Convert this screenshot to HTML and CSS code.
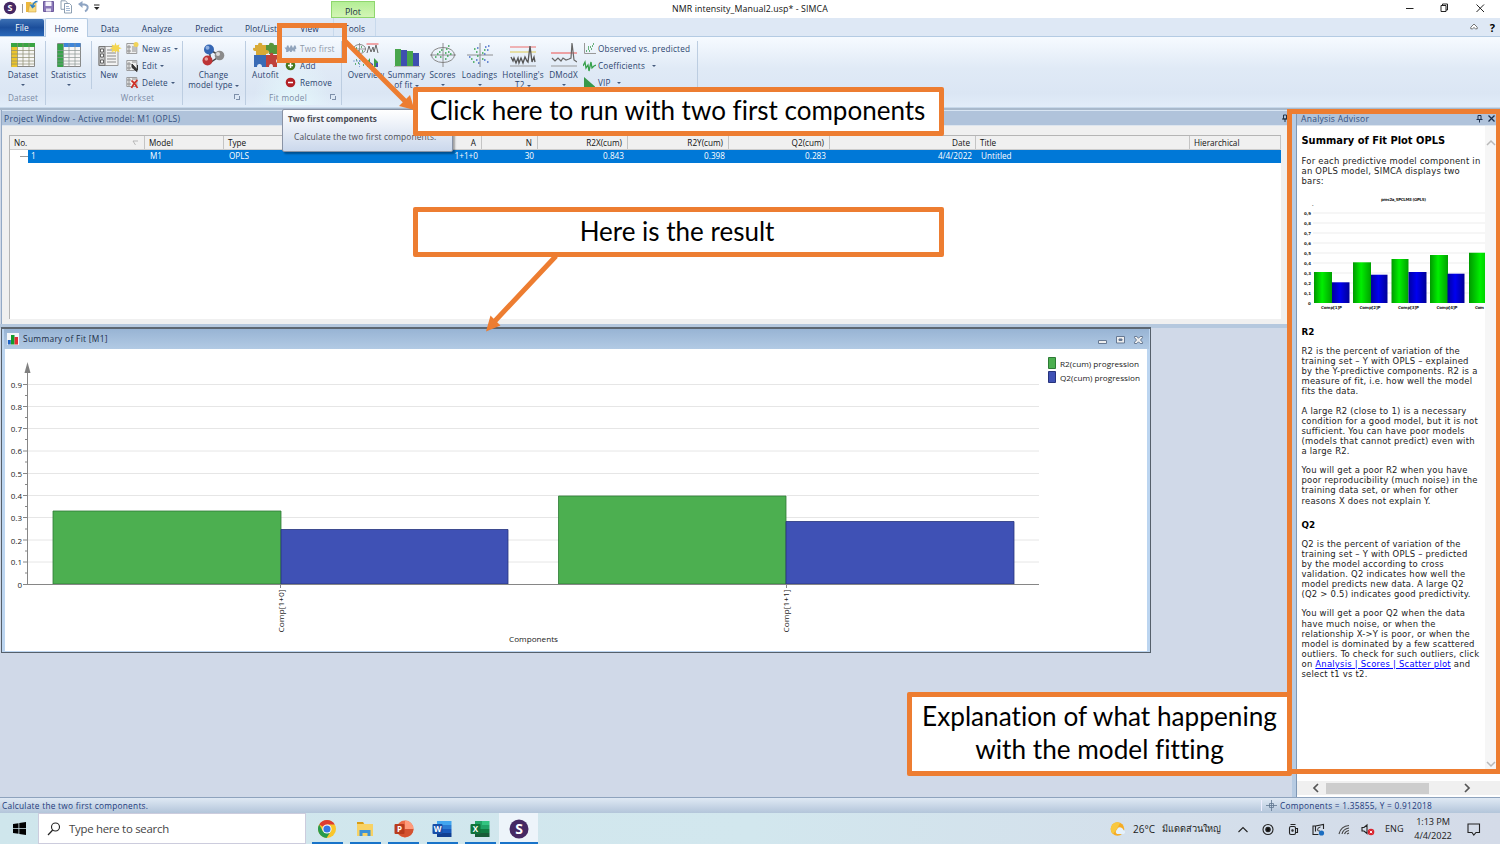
FILE: index.html
```html
<!DOCTYPE html>
<html lang="en">
<head>
<meta charset="utf-8">
<title>NMR intensity_Manual2.usp* - SIMCA</title>
<link rel="stylesheet" href="styles.css">
</head>
<body>
<div class="app">
  <header class="titlebar">
    <svg class="quick" width="110" height="18" viewBox="0 0 110 18">
      <circle cx="10" cy="8" r="6.2" fill="#452863"/>
      <text x="10" y="11.3" text-anchor="middle" class="s-logo">S</text>
      <path d="M22.5 4v9" stroke="#999"/>
      <path d="M26 2h5v10h-5z" fill="#edb83c"/><path d="M30 3h6v9h-8z" fill="#f8dc83" stroke="#d2a23a" stroke-width=".6"/><path d="M37.500 1.500q-4 0-5 5M30.500 4.500l2 3 2.500-2" stroke="#2b7fc4" stroke-width="1.500" fill="none"/>
      <path d="M43.500 1.500h10v10h-10z" fill="#8b78b8" stroke="#6c5a9c"/><path d="M45.500 1.500h6v4.500h-6z" fill="#f6f4fb"/><path d="M46 8.500h5v3h-5z" fill="#e4def0"/>
      <g fill="#fff" stroke="#71889f" stroke-width=".8"><path d="M61 .8h4.500l1.500 1.500v7h-6z"/><path d="M64.500 3.500h5l2 2v7.500h-7z"/></g><path d="M66 6.500h3M66 8.500h4M66 10.500h4" stroke="#7d9bc0" stroke-width=".7"/>
      <path d="M80 4.500h4.500q4 .8 3 4-.6 2-2.500 2.800" fill="none" stroke="#8fa5c3" stroke-width="2"/><path d="M82.500 1v7L78 4z" fill="#8fa5c3"/>
      <path d="M94 5h5.500" stroke="#222"/><path d="M94 7h5.500l-2.700 3z" fill="#222"/>
    </svg>
    <span class="app-title">NMR intensity_Manual2.usp* - SIMCA</span>
    <svg class="winctl" width="100" height="18" viewBox="1400 0 100 18" fill="none" stroke="#222"><path d="M1406 8.500h7.500"/><path d="M1441 5.500h5v6h-5zM1442.500 5.500v-1.500h5v6h-1.500"/><path d="M1476.500 4.500l7.500 7.500M1484 4.500l-7.500 7.500"/></svg>
  </header>
  <nav class="tabs">
    <span class="tab file">File</span><span class="tab home">Home</span><span class="tab data">Data</span><span class="tab analyze">Analyze</span><span class="tab predict">Predict</span><span class="tab plotlist">Plot/List</span><span class="tab view">View</span><span class="tab tools">Tools</span>
    <span class="help"><svg width="8" height="8" viewBox="0 0 8 8" fill="#fff" stroke="#555" stroke-width=".8"><path d="M.8 4.200L4 1l3.200 3.200v1.600H5.500L4 4.500 2.500 5.800H.8z"/></svg><b>?</b></span>
  </nav>
  <section class="ribbon">
    <div class="group g-dataset">
      <div class="big"><svg width="26" height="26" viewBox="0 0 26 26"><path d="M1.500 1.500h23v23h-23z" fill="#f6f6f4" stroke="#888"/><path d="M1.500 5h6v20h-6z" fill="#ecc52b"/><path d="M1 1h24v4H1z" fill="#39a443"/><path d="M1 8.500h24M1 12h24M1 15.500h24M1 19h24M1 22h24M7.500 1v24M13 1v24M19 1v24" stroke="#8c8c70" stroke-width=".7"/></svg><span>Dataset</span><i class="caret"></i></div>
      <div class="gname">Dataset</div>
    </div>
    <div class="group g-stat">
      <div class="big"><svg width="26" height="26" viewBox="0 0 26 26"><path d="M1.500 1.500h23v23h-23z" fill="#f6f6f6" stroke="#888"/><path d="M1.500 2h6v23h-6z" fill="#35a349"/><path d="M7.500 1h17v4h-17z" fill="#3f85d8"/><path d="M1 8.500h24M1 12h24M1 15.500h24M1 19h24M1 22h24M7.500 1v24M13 1v24M19 1v24" stroke="#8b9793" stroke-width=".7"/></svg><span>Statistics</span><i class="caret"></i></div>
    </div>
    <div class="group g-workset">
      <div class="row">
        <div class="big new"><svg width="26" height="26" viewBox="0 0 26 26"><path d="M3 4.500h19v19H3z" fill="#f2f2f2" stroke="#999"/><path d="M3 4.500h6v19H3z" fill="#c9c9c9" stroke="#777"/><path d="M4.500 7h3v3h-3zM4.500 12h3v3h-3zM4.500 18h3v3h-3z" fill="#fff" stroke="#444" stroke-width=".8"/><path d="M11 8h9M11 11h9M11 14h9M11 17h9M11 20h9" stroke="#888"/><path d="M19.500.5l1 3 3-1-.8 2.500 3 1.200-3 1 .8 3-3-1.200-1 2-1-2-3 1.200 1-3-2.500-1 2.500-1.200-1-2.500 3 1z" fill="#f4d650"/></svg><span>New</span></div>
        <div class="stack">
          <div class="small"><svg width="13" height="13" viewBox="0 0 13 13"><path d="M.8 1.500h10v10H.8z" fill="#eee" stroke="#888" stroke-width=".8"/><path d="M2 4h2v2H2zM2 8h2v2H2zM6 5h4M6 7h4M6 9h4" fill="#fff" stroke="#666" stroke-width=".7"/><circle cx="10" cy="2.500" r="2.500" fill="#f1d358"/></svg><span>New as</span><i class="caret"></i></div>
          <div class="small"><svg width="13" height="13" viewBox="0 0 13 13"><path d="M.8 1.500h10v10H.8z" fill="#eee" stroke="#888" stroke-width=".8"/><path d="M2 4h2v2H2zM2 8h2v2H2zM6 3h4" fill="#fff" stroke="#666" stroke-width=".7"/><path d="M6 5l5 5.500v2l-5-4zM11.500 6v5" fill="#343434" stroke="#333"/></svg><span>Edit</span><i class="caret"></i></div>
          <div class="small"><svg width="13" height="13" viewBox="0 0 13 13"><path d="M.8 1.500h10v9H.8z" fill="#eee" stroke="#888" stroke-width=".8"/><path d="M2 3h2v2H2zM2 7h2v2H2zM6 3h4" fill="#fff" stroke="#666" stroke-width=".7"/><path d="M5.500 4.500q4 3 6 7.500M11.500 4q-4 3-6 8" stroke="#cf3025" stroke-width="1.700" fill="none"/></svg><span>Delete</span><i class="caret"></i></div>
        </div>
      </div>
      <div class="gname">Workset</div>
    </div>
    <div class="group g-change">
      <div class="big"><svg width="24" height="26" viewBox="0 0 24 26"><path d="M7 7l2 13 9-6z" fill="none" stroke="#444" stroke-width="1.500"/><circle cx="7" cy="7.500" r="5" fill="#3466b4"/><circle cx="5.500" cy="5.800" r="2" fill="#8eafe0"/><circle cx="5.500" cy="18.500" r="5" fill="#bd3436"/><circle cx="4.300" cy="17" r="1.800" fill="#e6a19e"/><circle cx="17.500" cy="13.500" r="4.800" fill="#8b8b8b"/><circle cx="16" cy="12" r="2" fill="#ddd"/></svg><span>Change</span><span>model type <i class="caret"></i></span></div>
      <i class="launcher"></i>
    </div>
    <div class="group g-fit">
      <div class="row">
        <div class="big autofit"><svg width="26" height="26" viewBox="0 0 26 26"><path d="M2 3h3q0-3 3-2 2 0 1 2h4v4q3 0 3 2.500T13 12v1H3V9Q0 9 0 7t2-1z" fill="#d8aa36"/><path d="M13 3h3q0-3 3-2 2 0 2 2h4v4q-2 2 0 5h-9q1-4-3-4z" fill="#56953a"/><path d="M1 13h12v3q3 0 2 3-1 2-2 1v5H9q0-3-2.500-3T4 25H1z" fill="#396bb5"/><path d="M13 13h4q0-3 2-2 2 0 1 2h4v4q-2 2 0 4v4h-4q0-3-2-3t-2 3h-3z" fill="#bf423c"/></svg><span>Autofit</span></div>
        <div class="stack">
          <div class="small dim"><svg width="13" height="13" viewBox="0 0 13 13"><path d="M.5 5.500h2l.5-2h1.500l.5 2h1l.5-2H8l.5 2h1l.5-2h1.500l1 3-1.500 1 .5 2H9.500l-.5-1.500L7.500 10H6l-.5-1.500L4 10H2l.3-2z" fill="#91a4bc"/></svg><span>Two first</span></div>
          <div class="small"><svg width="13" height="13" viewBox="0 0 13 13"><circle cx="6.500" cy="6.500" r="4.800" fill="#47781f"/><path d="M6.500 4v5M4 6.500h5" stroke="#fff" stroke-width="1.500"/></svg><span>Add</span></div>
          <div class="small"><svg width="13" height="13" viewBox="0 0 13 13"><circle cx="6.500" cy="6.500" r="4.800" fill="#b32226"/><path d="M4 6.500h5" stroke="#fff" stroke-width="1.500"/></svg><span>Remove</span></div>
        </div>
      </div>
      <div class="gname">Fit model</div><i class="launcher"></i>
    </div>
    <div class="group g-plots">
      <div class="big ov"><svg width="26" height="26" viewBox="0 0 26 26"><ellipse cx="6.500" cy="7" rx="6" ry="4.500" fill="none" stroke="#888"/><path d="M0 7h13M6.500 1v12" stroke="#777" stroke-width=".7"/><path d="M3 6h1M8 5h1M5 9h1M9 9h1M3 18h1M6 16h1M5 21h1M9 19h1M10 23h1M2 22h1" stroke="#389a4d" stroke-width="1.500"/><path d="M0 19h13M6.500 15v10" stroke="#5d86c4" stroke-width=".7" stroke-dasharray="2 1"/><path d="M13.500 2h12" stroke="#e55"/><path d="M14 11l2-7 2 6 2-5 1 5 2-7 2 8" fill="none" stroke="#666"/><path d="M14 25v-5l3-4v9zM21 25v-9l4 4v5z" fill="#3d9c4a"/><path d="M17 25v-5l3 2v3zM23 25v-4h2v4z" fill="#3f51b5"/></svg><span>Overview</span></div>
      <div class="big su"><svg width="26" height="26" viewBox="0 0 26 26"><path d="M1 7h6v17H1zM13 9h6v15h-6z" fill="#48a64c"/><path d="M7 8h6v16H7zM19 11h6v13h-6z" fill="#3e4fb0"/><path d="M0 24.500h26" stroke="#bbb"/></svg><span>Summary</span><span>of fit <i class="caret"></i></span></div>
      <div class="big sc"><svg width="26" height="26" viewBox="0 0 26 26"><ellipse cx="13" cy="13" rx="11.500" ry="7.500" fill="none" stroke="#888"/><path d="M0 13h26M13 1v24" stroke="#777" stroke-width=".8"/><path d="M7 12h1.500M9 10h1.500M10 15h1.500M15 11h1.500M17 14h1.500M15 17h1.500M18 10h1.500M11 8h1.500M20 12h1.500M18 4h1.500M16 7h1.500M5 15h1.500" stroke="#34a34c" stroke-width="1.500"/></svg><span>Scores</span><i class="caret"></i></div>
      <div class="big lo"><svg width="26" height="26" viewBox="0 0 26 26"><path d="M0 13h26M13 1v24" stroke="#777" stroke-width=".8"/><path d="M7 7h1.500M9 10h1.500M10 14h1.500M4 17h1.500M15 11h1.500M17 8h1.500M15 17h1.500M6 20h1.500" stroke="#34a34c" stroke-width="1.500"/><path d="M10 6h1.500M18 5h1.500M20 8h1.500M17 12h1.500M9 18h1.500M11 21h1.500M20 20h1.500M17 18h1.500M2 15h1.500M21 4h1.500" stroke="#4169c8" stroke-width="1.500"/></svg><span>Loadings</span><i class="caret"></i></div>
      <div class="big ho"><svg width="26" height="26" viewBox="0 0 26 26"><path d="M0 5h26" stroke="#ed6f6d"/><path d="M0 10h26" stroke="#dfca52"/><path d="M1 15l2 4 1-3 2 5 2-5 1 5 2-5 2 5 2-6 2 4 1 1 2-16 2 16 2-5 1 5" fill="none" stroke="#555" stroke-width="1.300"/><path d="M0 24h26" stroke="#999"/></svg><span>Hotelling's</span><span>T2 <i class="caret"></i></span></div>
      <div class="big dm"><svg width="26" height="26" viewBox="0 0 26 26"><path d="M0 11h26" stroke="#ed514f"/><path d="M1 16l3 3 3-3 3 3 2-3 3 2 3-1 2-1 1-15 2 17 3 2" fill="none" stroke="#666" stroke-width="1.200"/><path d="M0 24h26" stroke="#999"/></svg><span>DModX</span><i class="caret"></i></div>
      <div class="stack">
        <div class="small"><svg width="13" height="13" viewBox="0 0 13 13"><path d="M1.500 1v10.500H13" fill="none" stroke="#999"/><path d="M3 9h1M5 7h1M6 9h1M7 5h1M9 4h1M10 2h1M8 7h1M5 5h1" stroke="#3b9b50" stroke-width="1.300"/></svg><span>Observed vs. predicted</span></div>
        <div class="small"><svg width="13" height="13" viewBox="0 0 13 13"><path d="M0 7l2-4 1 6 2-3 1 6 2-9 1 6 2-2 2-1" fill="none" stroke="#35a04a" stroke-width="1.300"/></svg><span>Coefficients &nbsp;</span><i class="caret"></i></div>
        <div class="small"><svg width="13" height="13" viewBox="0 0 13 13"><path d="M1 1l11 9.500V13H1z" fill="#38984a"/></svg><span>VIP &nbsp;</span><i class="caret"></i></div>
      </div>
    </div>
  </section>

  <main class="work">
    <div class="left">
      <section class="project">
        <div class="panel-title"><span>Project Window - Active model: M1 (OPLS)</span><svg width="8" height="9" viewBox="0 0 8 9"><path d="M2.500 1h3v4h-3zM1 5h6M4 5v3" fill="none" stroke="#234"/></svg></div>
        <div class="list">
          <div class="lrow head"><span>No.<svg class="sort" width="7" height="6" viewBox="0 0 7 6"><path d="M6 1H1l2.500 4" fill="none" stroke="#aaa" stroke-width=".8"/></svg></span><span>Model</span><span>Type</span><span class="r">A</span><span class="r">N</span><span class="r">R2X(cum)</span><span class="r">R2Y(cum)</span><span class="r">Q2(cum)</span><span class="r">Date</span><span>Title</span><span>Hierarchical</span></div>
          <div class="lrow sel"><span class="first">1</span><span>M1</span><span>OPLS</span><span class="r">1+1+0</span><span class="r">30</span><span class="r">0.843</span><span class="r">0.398</span><span class="r">0.283</span><span class="r">4/4/2022</span><span>Untitled</span><span></span></div>
        </div>
      </section>
      <section class="mdi">
        <div class="chart-win">
          <div class="chart-title">
            <svg width="12" height="12" viewBox="0 0 12 12"><path d="M0 0h12v12H0z" fill="#f4f6f8"/><path d="M.8 7h3v4.500h-3z" fill="#1e62c4"/><path d="M4 2h3.500v9.500H4z" fill="#129b2a"/><path d="M7.500 4h3.500v7.500H7.500z" fill="#de2d35"/></svg>
            <span>Summary of Fit [M1]</span>
            <svg class="ctl" width="48" height="12" viewBox="0 0 48 12" fill="#eee" stroke="#667993"><path d="M1.500 6.500h8v3h-8z"/><path d="M19.500 2.500h8v6.500h-8z"/><path d="M22 5h3v1.500h-3z" fill="#667993"/><path d="M37.500 2.500h2.300l1.700 1.700 1.700-1.700h2.300v1.200L43.500 6l2 2.200v1.300h-2.300l-1.700-1.700-1.700 1.700h-2.300V8.200l2-2.200-2-2.300z"/></svg>
          </div>
          <svg class="chart" width="1142" height="302" viewBox="5 349 1142 302">
            <path d="M28 384.500H1039M28 406.500H1039M28 428.500H1039M28 451H1039M28 473.500H1039M28 495.500H1039M28 517.500H1039M28 540H1039M28 562H1039" stroke="#e6e6e6"/>
            <g stroke-width=".8"><path d="M53 511h228v73H53zM558.500 496h227.500v88H558.500z" fill="#4caf50" stroke="#2d7a35"/><path d="M281 529.500h227v54.500H281zM786 521.500h228v62.500H786z" fill="#3f51b5" stroke="#26337c"/></g>
            <path d="M27.500 370V584.500M23 384.500h4M23 406.500h4M23 428.500h4M23 451h4M23 473.500h4M23 495.500h4M23 517.500h4M23 540h4M23 562h4M23 584.500H1039M25 395.500h2M25 417.500h2M25 439.500h2M25 462h2M25 484.500h2M25 506.500h2M25 529h2M25 551h2M25 573h2M280.500 584v4M786.500 584v4" stroke="#868686" fill="none"/>
            <path d="M27.500 362l3 11h-6z" fill="#808080"/>
            <g class="axis" text-anchor="end"><text x="22" y="387.500">0.9</text><text x="22" y="409.500">0.8</text><text x="22" y="432">0.7</text><text x="22" y="454">0.6</text><text x="22" y="477">0.5</text><text x="22" y="498.500">0.4</text><text x="22" y="520.500">0.3</text><text x="22" y="543.500">0.2</text><text x="22" y="565">0.1</text><text x="22" y="587.500">0</text></g>
            <g class="axis"><text transform="translate(283.500 632.500) rotate(-90)" textLength="43" lengthAdjust="spacingAndGlyphs">Comp[1+0]</text><text transform="translate(789 632.500) rotate(-90)" textLength="43" lengthAdjust="spacingAndGlyphs">Comp[1+1]</text><text x="509" y="641.500" textLength="49" lengthAdjust="spacingAndGlyphs">Components</text><text x="1060" y="366.500" textLength="79" lengthAdjust="spacingAndGlyphs">R2(cum) progression</text><text x="1060" y="380.500" textLength="80" lengthAdjust="spacingAndGlyphs">Q2(cum) progression</text></g>
            <path d="M1048.500 357.500h7v11h-7z" fill="#4caf50" stroke="#2d7a35"/><path d="M1048.500 371.500h7v11h-7z" fill="#3f51b5" stroke="#26337c"/>
          </svg>
        </div>
      </section>
    </div>
    <aside class="advisor">
      <div class="panel-title"><span>Analysis Advisor</span><svg width="22" height="10" viewBox="0 0 22 10" fill="none" stroke="#1c2f4c"><path d="M3 1.500h3v4H3zM1.500 5.500h6M4.500 5.500v3"/><path d="M13.500 1.500l6 6M19.500 1.500l-6 6" stroke-width="1.300"/></svg></div>
      <div class="doc-wrap">
        <article class="doc">
          <h1>Summary of Fit Plot OPLS</h1>
          <p>For each predictive model component in<br>an OPLS model, SIMCA displays two<br>bars:</p>
          <svg class="mini" width="184" height="125" viewBox="1301 192 184 125">
            <defs>
              <linearGradient id="gg"><stop offset="0" stop-color="#009800"/><stop offset=".45" stop-color="#00ef00"/><stop offset="1" stop-color="#00a000"/></linearGradient>
              <linearGradient id="bb"><stop offset="0" stop-color="#0000a0"/><stop offset=".45" stop-color="#0000f0"/><stop offset="1" stop-color="#000096"/></linearGradient>
            </defs>
            <path d="M1313 213h172M1313 223h172M1313 233h172M1313 243h172M1313 253h172M1313 263h172M1313 273h172M1313 283h172M1313 293h172" stroke="#ededed"/>
            <g fill="url(#gg)"><path d="M1314 272h18v31h-18z"/><path d="M1353 262.300h18v40.700h-18z"/><path d="M1391.500 259h17v44h-17z"/><path d="M1430 255h18v48h-18z"/><path d="M1469 252.700h25v50.300h-25z"/></g>
            <g fill="url(#bb)"><path d="M1332 282.300h17.500v20.700H1332z"/><path d="M1371 274.700h16.500v28.300H1371z"/><path d="M1408.500 272h18v31h-18z"/><path d="M1447.500 273.700h17v29.300h-17z"/></g>
            <g class="tiny"><text x="1381" y="201" textLength="45">prec2a_SPCLM3 (OPLS)</text><text x="1312" y="206">.</text>
            <text x="1304" y="214.500">0,9</text><text x="1304" y="224.500">0,8</text><text x="1304" y="234.500">0,7</text><text x="1304" y="244.500">0,6</text><text x="1304" y="254.500">0,5</text><text x="1304" y="264.500">0,4</text><text x="1304" y="274.500">0,3</text><text x="1304" y="284.500">0,2</text><text x="1304" y="294.500">0,1</text><text x="1308" y="304.500">0</text>
            <text x="1321" y="309" textLength="21">Comp[1]P</text><text x="1359.500" y="309" textLength="21">Comp[2]P</text><text x="1398" y="309" textLength="21">Comp[3]P</text><text x="1436.500" y="309" textLength="21">Comp[4]P</text><text x="1475" y="309" textLength="9">Com</text></g>
          </svg>
          <h2>R2</h2>
          <p>R2 is the percent of variation of the<br>training set – Y with OPLS – explained<br>by the Y-predictive components. R2 is a<br>measure of fit, i.e. how well the model<br>fits the data.</p>
          <p>A large R2 (close to 1) is a necessary<br>condition for a good model, but it is not<br>sufficient. You can have poor models<br>(models that cannot predict) even with<br>a large R2.</p>
          <p>You will get a poor R2 when you have<br>poor reproducibility (much noise) in the<br>training data set, or when for other<br>reasons X does not explain Y.</p>
          <h2 class="q2">Q2</h2>
          <p>Q2 is the percent of variation of the<br>training set – Y with OPLS – predicted<br>by the model according to cross<br>validation. Q2 indicates how well the<br>model predicts new data. A large Q2<br>(Q2 &gt; 0.5) indicates good predictivity.</p>
          <p>You will get a poor Q2 when the data<br>have much noise, or when the<br>relationship X-&gt;Y is poor, or when the<br>model is dominated by a few scattered<br>outliers. To check for such outliers, click<br>on <a>Analysis | Scores | Scatter plot</a> and<br>select t1 vs t2.</p>
        </article>
        <div class="vscroll"><svg width="10" height="7" viewBox="0 0 10 7"><path d="M1 6l4-4 4 4" fill="none" stroke="#b9b9b9" stroke-width="1.500"/></svg><svg width="10" height="7" viewBox="0 0 10 7"><path d="M1 1l4 4 4-4" fill="none" stroke="#b9b9b9" stroke-width="1.500"/></svg></div>
      </div>
      <div class="hscroll"><svg width="8" height="10" viewBox="0 0 8 10"><path d="M6 1L2 5l4 4" fill="none" stroke="#555" stroke-width="1.700"/></svg><i></i><svg width="8" height="10" viewBox="0 0 8 10"><path d="M2 1l4 4-4 4" fill="none" stroke="#555" stroke-width="1.700"/></svg></div>
    </aside>
  </main>

  <div class="status"><span>Calculate the two first components.</span><span class="coords"><svg width="11" height="11" viewBox="0 0 11 11"><path d="M5.500 0v11M0 5.500h11M3.500 3.500h4v4h-4z" fill="none" stroke="#60768f" stroke-width=".8"/></svg><span>Components = 1.35855, Y = 0.912018</span></span></div>

  <footer class="taskbar">
    <div class="start"><svg width="13" height="13" viewBox="0 0 13 13"><path d="M0 2l5.500-.8V6H0zM6.300 1L13 0v6H6.300zM0 6.800h5.500v5L0 11zM6.300 6.800H13V13l-6.700-1z" fill="#000"/></svg></div>
    <div class="search"><svg width="14" height="14" viewBox="0 0 14 14"><circle cx="8.500" cy="5" r="4" fill="none" stroke="#222" stroke-width="1.100"/><path d="M5.700 8L1 13" stroke="#222" stroke-width="1.200"/></svg><span>Type here to search</span></div>
    <div class="apps">
      <div class="ap"><svg width="20" height="20" viewBox="0 0 20 20"><circle cx="10" cy="10" r="9" fill="#f9c62b"/><path d="M10 10L2.200 5.500A9 9 0 0 1 17.800 5.500H10z" fill="#dd3d31"/><path d="M10 10L6 12.500 2.200 5.500A9 9 0 0 0 9.500 19L14 12z" fill="#289b4d"/><circle cx="10" cy="10" r="4.600" fill="#fff"/><circle cx="10" cy="10" r="3.600" fill="#3478e5"/></svg></div>
      <div class="ap"><svg width="20" height="20" viewBox="0 0 20 20"><path d="M2 3h6l1.500 2H18v12H2z" fill="#f8d264"/><path d="M2 3h6l1 2H2z" fill="#d99d16"/><path d="M4.500 11h11v6h-3v-3h-5v3h-3z" fill="#3d92d6"/></svg></div>
      <div class="ap"><svg width="20" height="20" viewBox="0 0 20 20"><circle cx="11" cy="10" r="8.500" fill="#ed6c47"/><path d="M11 1.500a8.500 8.500 0 0 1 8.500 8.500H11z" fill="#ff9b7a"/><path d="M11 10h8.500a8.500 8.500 0 0 1-15 5z" fill="#d35230"/><rect x=".5" y="5" width="10" height="10" rx="1" fill="#b83b1d"/><text x="5.500" y="13" text-anchor="middle" class="office">P</text></svg></div>
      <div class="ap"><svg width="20" height="20" viewBox="0 0 20 20"><path d="M5 2h14.500v4H5z" fill="#41a5ee"/><path d="M5 6h14.500v4H5z" fill="#2b7cd3"/><path d="M5 10h14.500v4H5z" fill="#185abd"/><path d="M5 14h14.500v4H5z" fill="#103f91"/><rect x=".5" y="5" width="10" height="10" rx="1" fill="#174ea8"/><text x="5.500" y="13" text-anchor="middle" class="office">W</text></svg></div>
      <div class="ap"><svg width="20" height="20" viewBox="0 0 20 20"><path d="M5 2h7v8H5z" fill="#21a366"/><path d="M12 2h7.500v4H12z" fill="#33c481"/><path d="M12 6h7.500v4H12z" fill="#21a366"/><path d="M5 10h14.500v4H5z" fill="#107c41"/><path d="M5 14h14.500v4H5z" fill="#185c37"/><rect x=".5" y="5" width="10" height="10" rx="1" fill="#0f733a"/><text x="5.500" y="13" text-anchor="middle" class="office">X</text></svg></div>
      <div class="ap active"><svg width="20" height="20" viewBox="0 0 20 20"><circle cx="10" cy="10" r="9.500" fill="#452863"/><text x="10" y="15" text-anchor="middle" class="s-big">S</text></svg></div>
    </div>
    <div class="tray">
      <svg width="16" height="16" viewBox="0 0 16 16"><circle cx="7.500" cy="8" r="6.800" fill="#f5ac24"/><path d="M7 1.200A6.800 6.800 0 0 0 3 13q4-4 7-11z" fill="#f8c840"/><path d="M7 13q-2.500-2 0-4.500 1-3 4-2 2 .5 2.500 2.500 3 1.500.5 4z" fill="#e5f1fb"/></svg>
      <span class="temp">26°C</span><span class="thai">มีแดดส่วนใหญ่</span>
      <svg class="trayicons" width="143" height="20" viewBox="1235 818 143 20" fill="none" stroke="#222" stroke-width="1.100">
        <path d="M1238.500 831l4.500-4.500 4.500 4.500"/>
        <circle cx="1268" cy="828.500" r="5"/><circle cx="1268" cy="828.500" r="2.200" fill="#111"/>
        <rect x="1289.500" y="825.500" width="6" height="8" rx="1.500"/><path d="M1295.500 827.500h2v4h-2M1290.500 823.500h5"/><circle cx="1292.500" cy="829.500" r=".7"/>
        <path d="M1323.500 828v-4.500l-8 1.500h-2.500v8.500h5.500M1315.500 825v5.500"/><path d="M1320.500 826q-3 .2-3 3 .5 1.500 2.500 1" stroke-width=".9"/><circle cx="1321.500" cy="832" r="2.600" fill="#1b6dc0" stroke="none"/>
        <path d="M1339 833q2-8 10-8.500M1342 833q1-5 7-6M1344.500 833q1-3 4.500-3.500M1347 833l2-1" stroke="#444"/>
        <path d="M1362 826.500h2l3-2.500v8.500l-3-2.500h-2z"/><circle cx="1371" cy="831" r="3.300" fill="#d9252f" stroke="none"/><path d="M1369.800 829.800l2.400 2.400M1372.200 829.800l-2.400 2.400" stroke="#fff" stroke-width=".9"/>
      </svg>
      <span class="lang">ENG</span>
      <div class="clock"><span>1:13 PM</span><span>4/4/2022</span></div>
      <svg class="note" width="14" height="14" viewBox="0 0 14 14"><path d="M1 2h11.500v8.500H9L6.800 13 5 10.500H1z" fill="none" stroke="#222" stroke-width="1.100"/></svg>
    </div>
  </footer>

  <div class="ctx-tab">Plot</div>
  <div class="tooltip"><b>Two first components</b><span>Calculate the two first components.</span></div>
  <svg class="arrows" width="1500" height="844" viewBox="0 0 1500 844"><g stroke="#ed7d31" stroke-width="5"><path d="M345 41L407 103M556 256L494 322"/></g><path d="M414.500 110l-15.500-4 11-11zM486 331.500l4.500-16 10 10z" fill="#ed7d31"/></svg>
  <div class="mark mark-button"></div>
  <div class="mark mark-advisor"></div>
  <div class="callout c1"><span>Click here to run with two first components</span></div>
  <div class="callout c2"><span>Here is the result</span></div>
  <div class="callout c3"><span>Explanation of what happening</span><span>with the model fitting</span></div>
</div>
</body>
</html>
```
FILE: styles.css
```css
* { box-sizing: border-box; }
body { margin: 0; font-family: "Open Sans", "Noto Sans", sans-serif; font-size: 8.2px; color: #1e3a66; }
svg { display: block; flex: none; }
.app { position: relative; width: 1500px; height: 844px; overflow: hidden; display: flex; flex-direction: column; background: #d0d9e8; white-space: nowrap; }
.s-logo { font: bold 9px "Open Sans", sans-serif; fill: #fff; }
.s-big { font: bold 14px "Open Sans", sans-serif; fill: #fff; }
.office { font: bold 8px "Open Sans", sans-serif; fill: #fff; }
.caret { display: inline-block; width: 0; height: 0; border: 2px solid transparent; border-top: 2.5px solid #445a7d; border-bottom: 0; vertical-align: middle; }

.titlebar { height: 18px; flex: none; background: #fff; display: grid; grid-template-columns: 110px 1fr 100px; }
.app-title { text-align: center; padding-right: 10px; color: #111; font-size: 8.8px; line-height: 19px; letter-spacing: .09px; }

.tabs { height: 19px; flex: none; display: flex; background: #dee8f5; border-bottom: 1px solid #b4cbe3; font-size: 8.4px; line-height: 21px; letter-spacing: .05px; }
.tab { text-align: center; }
.file { width: 44px; margin-top: 1px; height: 17px; line-height: 18px; color: #fff; background: linear-gradient(#3c70b4, #1c4f9c 50%, #2a68b8); border-radius: 2px 2px 0 0; }
.home { width: 43px; margin-left: 1px; height: 19px; background: #f8fbff; border: 1px solid #b4cbe3; border-bottom: 0; border-radius: 2px 2px 0 0; line-height: 19px; }
.data { width: 44px; } .analyze { width: 50px; } .predict { width: 54px; } .plotlist { width: 50px; } .view { width: 47px; }
.tools { width: 43px; border: 1px solid #c8d9ec; border-width: 0 1px; }
.help { margin-left: auto; display: flex; align-items: center; gap: 12px; padding-right: 5px; color: #000; }
.help b { font-size: 11px; }

.ribbon { height: 71px; flex: none; display: flex; background: linear-gradient(#f6faff, #e0eaf6 45%, #dbe6f4 80%, #e2edf9); border-bottom: 1px solid #c7d8ea; color: #2c456f; }
.group { position: relative; display: flex; flex-direction: column; height: 60px; margin-top: 4px; border-right: 1px solid #bccde1; flex: none; }
.g-dataset { width: 46px; height: 64px; padding-left: 1px; } .g-stat { width: 46px; height: 48px; } .g-workset { width: 91px; height: 64px; } .g-change { width: 63px; height: 64px; } .g-fit { width: 96px; height: 64px; background: radial-gradient(ellipse at 50% 100%, #e4f8fb, transparent 60%); } .g-plots { width: 356px; height: 64px; flex-direction: row; }
.row { display: flex; height: 51px; }
.big { display: flex; flex-direction: column; align-items: center; line-height: 10px; letter-spacing: .15px; height: 51px; }
.big > svg { margin: 1px 0 2px; }
.big > .caret { margin-top: 4px; }
.g-change .big { padding-right: 1px; }
.new { width: 34px; } .autofit { width: 39px; }
.autofit + .stack { margin-left: -1px; }
.stack { display: flex; flex-direction: column; margin-top: -1px; letter-spacing: .2px; }
.small { display: flex; align-items: center; height: 17.2px; gap: 3px; }
.g-fit .small { gap: 3px; }
.g-plots .small { gap: 2px; }
.dim { color: #8e98a8; }
.gname { text-align: center; color: #7b8ba5; line-height: 12px; letter-spacing: .3px; padding-left: 1px; }
.g-dataset .gname { padding: 0; letter-spacing: .1px; }
.g-fit .gname { padding-right: 12px; }
.launcher { position: absolute; right: 6px; bottom: 6px; width: 5px; height: 5px; border: 1px solid #7d8fa9; border-right: 0; border-bottom: 0; }
.launcher::after { content: ""; position: absolute; right: -1px; bottom: -1px; width: 3px; height: 3px; border: 1px solid #7d8fa9; border-left: 0; border-top: 0; }
.ov { width: 48px; } .su { width: 33px; } .sc { width: 39px; } .lo { width: 35px; } .ho { width: 52px; } .dm { width: 29px; }
.g-plots .stack { padding-left: 5px; }

.work { height: 689px; flex: none; display: flex; border-top: 2px solid #a8b9cc; }
.left { width: 1292px; height: 687px; display: flex; flex-direction: column; background: #d0d9e8; }
.project { height: 214px; margin-left: 1px; border-left: 1px solid #93a9c5; background: #f0f0f0; display: flex; flex-direction: column; flex: none; }
.panel-title { height: 16px; flex: none; background: #b0c3db; border-top: 1px solid #d8e5f3; border-bottom: 1px solid #dde5ee; display: flex; align-items: center; justify-content: space-between; padding: 1px 3px 0 2px; color: #33507e; font-size: 8.5px; letter-spacing: .28px; }
.list { margin: 9px 11px 5px 7px; flex: 1; background: #fff; border: 1px solid #b5b5b5; border-right: 0; border-bottom: 0; color: #111; }
.lrow { display: grid; grid-template-columns: 135px 79px 206px 52px 56px 90px 101px 101px 146px 214px 1fr; line-height: 13px; font-size: 8.2px; }
.lrow span { padding: 0 5px 0 4px; }
.lrow .r { text-align: right; }
.head { height: 14px; background: #f0f0f0; border-bottom: 1px solid #ccc; }
.head span { border-right: 1px solid #c4c4c4; height: 13px; }
.head span:first-child { display: flex; justify-content: space-between; align-items: center; }
.sel { height: 13px; line-height: 12px; color: #fff; background: linear-gradient(90deg, #fff 18px, #0078d7 18px); }
.sel .r { padding-right: 4px; }
.sel span { padding-left: 5px; }
.sel .first { padding-left: 21px; background: linear-gradient(#999, #999) 10px 6px / 8px 1px no-repeat; }
.mdi { flex: 1; border-top: 4px solid #b5c8de; padding: 0 0 0 1px; }
.chart-win { width: 1150px; height: 326px; margin-top: -1px; padding: 0 2px 2px 3px; border: 1px solid #55606b; border-top: 2px solid #5d6670; background: #bcd5f0; }
.chart-title { height: 20px; margin: 0 -1px; display: flex; align-items: center; padding: 0 4px 0 3px; gap: 4px; background: linear-gradient(#98b4d4, #b2cae4); color: #1b2c46; font-size: 8.4px; letter-spacing: .3px; }
.chart-title span { margin-top: -1px; }
.ctl { margin: 1px 0 0 auto; }
.chart { background: #fff; }
.axis { font: 8px "Open Sans", sans-serif; fill: #222; }

.advisor { width: 208px; display: flex; flex-direction: column; background: #fff; border-left: 4px solid #b7cbe2; box-shadow: inset 1px 0 #7e97b5; padding-left: 1px; }
.advisor .panel-title { padding-left: 4px; }
.doc-wrap { height: 646px; display: flex; }
.doc { width: 188px; overflow: hidden; padding: 9px 0 0 4.500px; font-family: "DejaVu Sans", sans-serif; font-size: 8.45px; line-height: 10.1px; letter-spacing: .22px; font-variant-ligatures: none; color: #222; }
.doc h1 { margin: 0 0 9px; font-size: 9.9px; line-height: 12px; letter-spacing: 0; color: #000; }
.doc p { margin: 0 0 9.2px; }
.doc h2 { margin: 10px 0 7.500px; font-size: 8.8px; line-height: 11px; letter-spacing: 0; color: #000; }
.doc .q2 { margin: 14px 0 8px; }
.doc a { color: #00f; text-decoration: underline; }
.mini { margin: -3px 0 0 -.5px; letter-spacing: 0; }
.tiny { font: bold 4px "DejaVu Sans", sans-serif; fill: #222; }
.vscroll { width: 15px; background: #f6f6f6; display: flex; flex-direction: column; justify-content: space-between; align-items: center; padding: 13px 4px 4px 0; }
.hscroll { height: 14px; margin-top: 9px; background: #f0f0f0; display: flex; align-items: center; padding: 0 29px 0 15px; }
.hscroll i { width: 103px; height: 11px; margin-left: 6px; background: #cdcdcd; }
.hscroll svg:last-child { margin-left: auto; }

.status { height: 16px; flex: none; display: flex; justify-content: space-between; align-items: center; background: linear-gradient(#dfe9f4, #b3c5da); border-top: 1px solid #8ea3bd; padding: 0 68px 0 2px; color: #1d3a7c; font-size: 8.3px; letter-spacing: .27px; }
.coords { display: flex; align-items: center; gap: 3px; border-left: 1px solid #eef; padding-left: 4px; }

.taskbar { height: 31px; flex: none; display: flex; background: linear-gradient(90deg, #cfe6ec, #d2e7ee 50%, #d4dfeb 78%, #d4dbe8); color: #222; }
.start { width: 38px; display: flex; align-items: center; justify-content: center; }
.search { width: 268px; background: #fff; border: 1px solid #ccd; display: flex; align-items: center; padding-left: 8px; gap: 8px; font-size: 11.4px; color: #444; letter-spacing: -.26px; }
.apps { display: flex; padding-left: 2px; }
.ap { width: 38.3px; display: flex; align-items: center; justify-content: center; background: linear-gradient(#1873c9, #1873c9) center bottom / 31px 2px no-repeat; }
.ap.active { background: linear-gradient(#1873c9, #1873c9) center bottom / 38px 2px no-repeat, #edf4fa; }
.tray { margin-left: auto; width: 390px; display: flex; align-items: center; font-size: 10px; }
.temp { margin-left: 7px; width: 29px; }
.thai { width: 59px; font-size: 9.2px; }
.trayicons { margin-left: 14px; }
.lang { margin-left: 7px; width: 25px; font-size: 9.1px; }
.clock { display: flex; flex-direction: column; align-items: center; width: 46px; font-size: 9.2px; line-height: 14px; letter-spacing: -.1px; }
.note { margin-left: 11px; }

.ctx-tab { position: absolute; left: 331px; top: 1px; width: 44px; height: 17px; background: linear-gradient(#b4ee96, #d3f5b5); border: 1px solid #8fd66e; text-align: center; line-height: 20px; font-size: 8.8px; color: #234; }
.tooltip { position: absolute; left: 282px; top: 109px; width: 171px; height: 43px; border: 1px solid #8993a5; border-radius: 2px; background: linear-gradient(#fff, #cbd8ec); box-shadow: 2px 2px 2px #0005; display: flex; flex-direction: column; padding: 3px 5px; color: #4c4c55; line-height: 12px; gap: 6px; }
.tooltip span { padding-left: 6px; font-size: 8.4px; letter-spacing: .12px; }
.arrows { position: absolute; left: 0; top: 0; }
.mark { position: absolute; border: 5px solid #ed7d31; }
.mark-button { left: 277px; top: 23px; width: 70px; height: 40px; }
.mark-advisor { left: 1287px; top: 109px; width: 214px; height: 665px; }
.callout { position: absolute; background: #fff; border: 5px solid #ed7d31; border-radius: 2px; color: #000; font-family: Lato, sans-serif; font-size: 26px; font-variant-ligatures: none; text-align: center; display: flex; flex-direction: column; justify-content: center; }
.c1 { left: 413px; top: 87px; width: 531px; height: 49px; padding: 0 2px 4px 0; }
.c2 { left: 413px; top: 207px; width: 531px; height: 50px; padding: 0 3px 2px 0; }
.c3 { left: 907px; top: 692px; width: 385px; height: 84px; line-height: 33px; padding-bottom: 2px; font-size: 26.2px; }
```
